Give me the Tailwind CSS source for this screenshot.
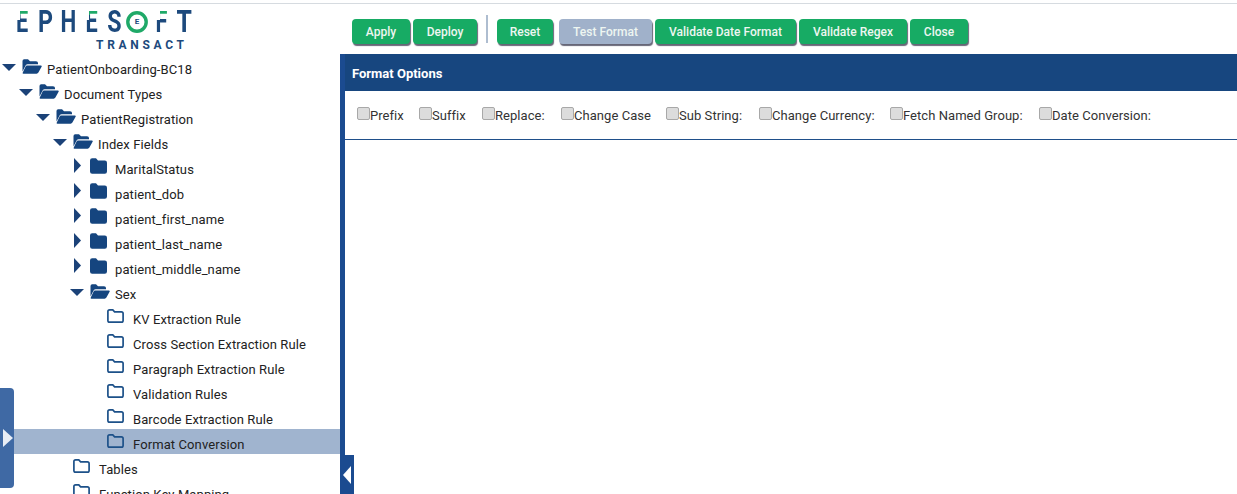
<!DOCTYPE html>
<html lang="en">
<head>
  <meta charset="UTF-8" />
  <title>Format Options</title>
  <script src="https://cdn.jsdelivr.net/npm/@tailwindcss/browser@4"></script>
</head>
<body class="bg-white text-[13px] text-[#222] font-['Roboto',sans-serif]">
  <svg class="hidden">
    <symbol id="open" viewBox="0 0 20 15"><path d="M0.5 12.5V2Q0.5 0.3 2.2 0.3H6L8 2.3H14Q16 2.3 16 4V5.2H5.8Q4.3 5.2 3.6 6.5Z" fill="#15457f"/><path d="M5 6.6H19Q20.2 6.6 19.6 7.7L16.4 13.6Q15.8 14.7 14.6 14.7H1.4Q0.2 14.7 0.8 13.6L3.6 7.6Q4 6.6 5 6.6Z" fill="#15457f"/></symbol>
    <symbol id="closed" viewBox="0 0 17 16"><path d="M0 2.5Q0 0.3 2.2 0.3H6L8 2.5H14.8Q17 2.5 17 4.7V13.6Q17 15.8 14.8 15.8H2.2Q0 15.8 0 13.6Z" fill="#15457f"/></symbol>
    <symbol id="outline" viewBox="0 0 17 14"><path d="M0.9 2.6Q0.9 0.9 2.6 0.9H5.8L7.6 2.8H14.4Q16.1 2.8 16.1 4.5V11.4Q16.1 13.1 14.4 13.1H2.6Q0.9 13.1 0.9 11.4Z" fill="none" stroke="#1d5189" stroke-width="1.7"/></symbol>
    <symbol id="down" viewBox="0 0 14 7"><path d="M0 0H14L7 7Z" fill="#1b4278"/></symbol>
    <symbol id="right" viewBox="0 0 7 15"><path d="M0 0L7 7.5L0 15Z" fill="#1b4278"/></symbol>
  </svg>

  <div class="relative w-[1237px] h-[494px] overflow-hidden">
    <div class="mt-[3px] h-px bg-[#d6dbe0]"></div>
    <div class="flex">
      <!-- left tree -->
      <aside class="w-[340px] h-[490px] overflow-hidden shrink-0">
        <div class="relative h-[50px] text-[#1d4a7d] font-bold">
          <div class="flex pl-[10px] pt-[7px] text-[31px] leading-[22px]">
            <span class="w-[24px] text-center scale-x-[.7] text-transparent bg-clip-text bg-[linear-gradient(#1fa968_19%,#1d4a7d_19%)]">E</span>
            <span class="w-[23px] text-center scale-x-[.75]">P</span>
            <span class="w-[23px] text-center scale-x-[.72]">H</span>
            <span class="w-[23px] text-center scale-x-[.7] text-transparent bg-clip-text bg-[linear-gradient(#1fa968_19%,#1d4a7d_19%)]">E</span>
            <span class="w-[23px] text-center scale-x-[.75]">S</span>
            <span class="w-[22px] relative">
              <svg class="absolute left-0 top-0 w-[22px] h-[22px]" viewBox="0 0 22 22"><circle cx="11" cy="11" r="9.2" fill="none" stroke="#1fa968" stroke-width="3.4"/></svg>
              <span class="absolute inset-0 text-center text-[8px] leading-[22px] text-[#1d4a7d]">E</span>
            </span>
            <span class="w-[27px] text-center scale-x-[.7] text-transparent bg-clip-text bg-[linear-gradient(#1fa968_19%,#1d4a7d_19%)]">F</span>
            <span class="w-[15px] text-center scale-x-[.8]">T</span>
          </div>
          <span class="absolute left-[15px] top-[7px] w-[5px] h-[9px] bg-white"></span>
          <span class="absolute left-[84px] top-[7px] w-[5px] h-[9px] bg-white"></span>
          <span class="absolute left-[155px] top-[7px] w-[5px] h-[9px] bg-white"></span>
          <div class="absolute left-[96px] top-[35px] text-[12px] leading-[12px] font-bold tracking-[3.7px]">TRANSACT</div>
        </div>

        <ul class="leading-[32px] tracking-[.1px]">
          <li class="relative h-[25px] pl-[47px]"><svg class="absolute left-[2px] top-[10px] w-[14px] h-[7px]"><use href="#down"/></svg><svg class="absolute left-[22px] top-[5px] w-[20px] h-[15px]"><use href="#open"/></svg>PatientOnboarding-BC18</li>
          <li class="relative h-[25px] pl-[64px]"><svg class="absolute left-[19px] top-[10px] w-[14px] h-[7px]"><use href="#down"/></svg><svg class="absolute left-[39px] top-[5px] w-[20px] h-[15px]"><use href="#open"/></svg>Document Types</li>
          <li class="relative h-[25px] pl-[81px]"><svg class="absolute left-[36px] top-[10px] w-[14px] h-[7px]"><use href="#down"/></svg><svg class="absolute left-[56px] top-[5px] w-[20px] h-[15px]"><use href="#open"/></svg>PatientRegistration</li>
          <li class="relative h-[25px] pl-[98px]"><svg class="absolute left-[53px] top-[10px] w-[14px] h-[7px]"><use href="#down"/></svg><svg class="absolute left-[73px] top-[5px] w-[20px] h-[15px]"><use href="#open"/></svg>Index Fields</li>
          <li class="relative h-[25px] pl-[115px]"><svg class="absolute left-[74px] top-[4px] w-[7px] h-[15px]"><use href="#right"/></svg><svg class="absolute left-[90px] top-[4px] w-[17px] h-[16px]"><use href="#closed"/></svg>MaritalStatus</li>
          <li class="relative h-[25px] pl-[115px]"><svg class="absolute left-[74px] top-[4px] w-[7px] h-[15px]"><use href="#right"/></svg><svg class="absolute left-[90px] top-[4px] w-[17px] h-[16px]"><use href="#closed"/></svg>patient_dob</li>
          <li class="relative h-[25px] pl-[115px]"><svg class="absolute left-[74px] top-[4px] w-[7px] h-[15px]"><use href="#right"/></svg><svg class="absolute left-[90px] top-[4px] w-[17px] h-[16px]"><use href="#closed"/></svg>patient_first_name</li>
          <li class="relative h-[25px] pl-[115px]"><svg class="absolute left-[74px] top-[4px] w-[7px] h-[15px]"><use href="#right"/></svg><svg class="absolute left-[90px] top-[4px] w-[17px] h-[16px]"><use href="#closed"/></svg>patient_last_name</li>
          <li class="relative h-[25px] pl-[115px]"><svg class="absolute left-[74px] top-[4px] w-[7px] h-[15px]"><use href="#right"/></svg><svg class="absolute left-[90px] top-[4px] w-[17px] h-[16px]"><use href="#closed"/></svg>patient_middle_name</li>
          <li class="relative h-[25px] pl-[115px]"><svg class="absolute left-[70px] top-[10px] w-[14px] h-[7px]"><use href="#down"/></svg><svg class="absolute left-[90px] top-[5px] w-[20px] h-[15px]"><use href="#open"/></svg>Sex</li>
          <li class="relative h-[25px] pl-[133px]"><svg class="absolute left-[107px] top-[5px] w-[17px] h-[14px]"><use href="#outline"/></svg>KV Extraction Rule</li>
          <li class="relative h-[25px] pl-[133px]"><svg class="absolute left-[107px] top-[5px] w-[17px] h-[14px]"><use href="#outline"/></svg>Cross Section Extraction Rule</li>
          <li class="relative h-[25px] pl-[133px]"><svg class="absolute left-[107px] top-[5px] w-[17px] h-[14px]"><use href="#outline"/></svg>Paragraph Extraction Rule</li>
          <li class="relative h-[25px] pl-[133px]"><svg class="absolute left-[107px] top-[5px] w-[17px] h-[14px]"><use href="#outline"/></svg>Validation Rules</li>
          <li class="relative h-[25px] pl-[133px]"><svg class="absolute left-[107px] top-[5px] w-[17px] h-[14px]"><use href="#outline"/></svg>Barcode Extraction Rule</li>
          <li class="relative h-[25px] pl-[133px] bg-[#a0b4cf]"><svg class="absolute left-[107px] top-[5px] w-[17px] h-[14px]"><use href="#outline"/></svg>Format Conversion</li>
          <li class="relative h-[25px] pl-[99px]"><svg class="absolute left-[73px] top-[5px] w-[17px] h-[14px]"><use href="#outline"/></svg>Tables</li>
          <li class="relative h-[25px] pl-[99px]"><svg class="absolute left-[73px] top-[5px] w-[17px] h-[14px]"><use href="#outline"/></svg>Function Key Mapping</li>
        </ul>
      </aside>

      <!-- main -->
      <main class="flex-1 min-w-0">
        <div class="h-[50px] pt-[15px] pl-[12px] flex items-start text-[12px] font-medium text-[#eef6f1]">
          <button class="w-[58px] h-[25px] pt-px rounded bg-[#17ab64] shadow-[1px_2px_1px_#667]">Apply</button>
          <button class="ml-[3px] w-[64px] h-[25px] pt-px rounded bg-[#17ab64] shadow-[1px_2px_1px_#667]">Deploy</button>
          <span class="ml-[9px] -mt-[4px] w-[2px] h-[28px] bg-[#aebdd0]"></span>
          <button class="ml-[9px] w-[56px] h-[25px] pt-px rounded bg-[#17ab64] shadow-[1px_2px_1px_#667]">Reset</button>
          <button class="ml-[6px] w-[93px] h-[25px] pt-px rounded bg-[#a0b1ca] shadow-[1px_2px_1px_#667]">Test Format</button>
          <button class="ml-[3px] w-[141px] h-[25px] pt-px rounded bg-[#17ab64] shadow-[1px_2px_1px_#667]">Validate Date Format</button>
          <button class="ml-[3px] w-[108px] h-[25px] pt-px rounded bg-[#17ab64] shadow-[1px_2px_1px_#667]">Validate Regex</button>
          <button class="ml-[3px] w-[58px] h-[25px] pt-px rounded bg-[#17ab64] shadow-[1px_2px_1px_#667]">Close</button>
        </div>
        <div class="border-l-[5px] border-[#1b4b90] h-[440px]">
          <div class="h-[37px] bg-[#17467f] pl-[7px] leading-[39px] font-bold text-white text-[13px]">Format Options</div>
          <div class="h-[49px] border-b border-[#1f4f8a] pl-[12px] pt-[16px] flex tracking-[.05px] text-[#333]">
            <label class="flex w-[62px]"><span class="w-[13px] h-[13px] rounded-[2px] bg-[#dcdcdc] border border-[#a8a8a8]"></span><span class="leading-[17px]">Prefix</span></label>
            <label class="flex w-[63px]"><span class="w-[13px] h-[13px] rounded-[2px] bg-[#dcdcdc] border border-[#a8a8a8]"></span><span class="leading-[17px]">Suffix</span></label>
            <label class="flex w-[79px]"><span class="w-[13px] h-[13px] rounded-[2px] bg-[#dcdcdc] border border-[#a8a8a8]"></span><span class="leading-[17px]">Replace:</span></label>
            <label class="flex w-[105px]"><span class="w-[13px] h-[13px] rounded-[2px] bg-[#dcdcdc] border border-[#a8a8a8]"></span><span class="leading-[17px]">Change Case</span></label>
            <label class="flex w-[93px]"><span class="w-[13px] h-[13px] rounded-[2px] bg-[#dcdcdc] border border-[#a8a8a8]"></span><span class="leading-[17px]">Sub String:</span></label>
            <label class="flex w-[131px]"><span class="w-[13px] h-[13px] rounded-[2px] bg-[#dcdcdc] border border-[#a8a8a8]"></span><span class="leading-[17px]">Change Currency:</span></label>
            <label class="flex w-[149px]"><span class="w-[13px] h-[13px] rounded-[2px] bg-[#dcdcdc] border border-[#a8a8a8]"></span><span class="leading-[17px]">Fetch Named Group:</span></label>
            <label class="flex"><span class="w-[13px] h-[13px] rounded-[2px] bg-[#dcdcdc] border border-[#a8a8a8]"></span><span class="leading-[17px]">Date Conversion:</span></label>
          </div>
        </div>
      </main>
    </div>

    <!-- collapse handles -->
    <div class="absolute left-0 top-[388px] w-[14px] h-[100px] rounded-r-[4px] bg-[#3f69a4] flex items-center pl-[3px]">
      <span class="w-0 h-0 border-y-[9px] border-y-transparent border-l-[10px] border-l-[#e8edf5]"></span>
    </div>
    <div class="absolute left-[340px] top-[455px] w-[14px] h-[39px] bg-[#1b4b90] flex items-center pl-[3px]">
      <span class="w-0 h-0 border-y-[9px] border-y-transparent border-r-[8px] border-r-white"></span>
    </div>
  </div>
</body>
</html>
